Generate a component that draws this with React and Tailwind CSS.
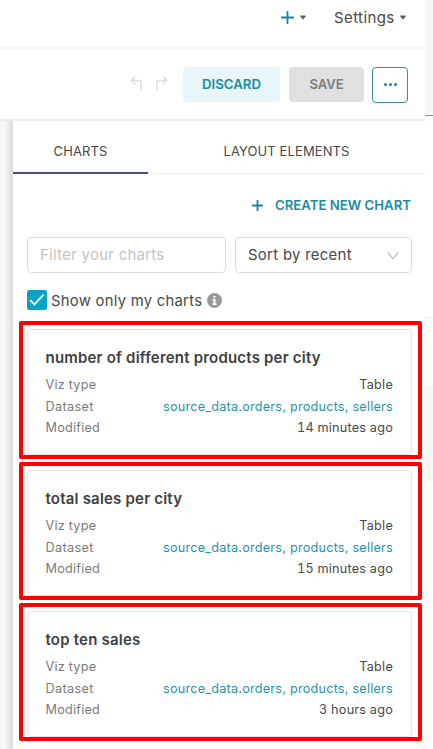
import React from "react";

const charts = [
  { title: "number of different products per city", modified: "14 minutes ago" },
  { title: "total sales per city", modified: "15 minutes ago" },
  { title: "top ten sales", modified: "3 hours ago" },
];

function Caret({ className }) {
  return (
    <svg className={className} width="6" height="5" viewBox="0 0 6 5" fill="#5c5c5c">
      <path d="M0.6 0.5h4.8q.6.3.2.9L3.4 4.2q-.4.4-.8 0L.4 1.4Q0 .8.6.5z" />
    </svg>
  );
}

function Plus({ size, width }) {
  return (
    <svg width={size} height={size} viewBox="0 0 12 12" stroke="#1a85a0" strokeWidth={width} strokeLinecap="round">
      <path d="M6 .8v10.4M.8 6h10.4" />
    </svg>
  );
}

function Undo({ className }) {
  return (
    <svg className={className} width="13" height="16" viewBox="0 0 13 16" fill="none" stroke="#dedede" strokeWidth="1.5" strokeLinecap="round" strokeLinejoin="round">
      <path d="M4.8 1 1.3 4.5 4.8 8M1.5 4.5h7q2.7 0 2.7 2.7v7" />
    </svg>
  );
}

function ChartCard({ title, modified }) {
  return (
    <div className="h-[138px] w-[403px] rounded-[2px] border-4 border-[#ff0000] pt-1 pl-1">
      <div className="h-[126px] w-[385px] rounded-[4px] border border-[#e2e2e4] pt-[18px] pr-[18px] pl-[17.5px]">
        <h3 className="text-[15px] leading-[20px] font-semibold tracking-[0.2px] whitespace-nowrap text-[#404040]">{title}</h3>
        <div className="mt-[6px] flex h-[22px] justify-between text-[12.7px] leading-[22px] tracking-[0.21px] text-[#7a7a7a]">
          <span>Viz type</span>
          <span className="text-[#484848]">Table</span>
        </div>
        <div className="flex h-[21px] justify-between text-[12.7px] leading-[22px] tracking-[0.21px] text-[#7a7a7a]">
          <span className="tracking-[0.35px]">Dataset</span>
          <span className="text-[#2494ab]">source_data.orders, products, sellers</span>
        </div>
        <div className="flex h-[21px] justify-between text-[12.7px] leading-[22px] tracking-[0.21px] text-[#7a7a7a]">
          <span>Modified</span>
          <span className="text-[#484848] tabular-nums">{modified}</span>
        </div>
      </div>
    </div>
  );
}

export default function App() {
  return (
    <div className="flex h-[749px] w-[433px] overflow-hidden bg-white font-['Inter',sans-serif] text-[#484848]">
      <div className="flex w-[425px] shrink-0 flex-col">
        <header className="flex h-[49px] items-center border-b-2 border-[#f5f5f5] pb-[12px] pl-[281px]">
          <Plus size={13} width={1.7} />
          <Caret className="ml-[6px]" />
          <span className="mt-[2px] ml-[28px] w-[61px] text-[15px] tracking-[0.4px]">Settings</span>
          <Caret className="ml-[5px]" />
        </header>
        <div className="flex h-[72px] items-center border-b-2 border-[#ebebeb] pt-px pl-[130px]">
          <Undo className="-mt-[2px]" />
          <Undo className="-mt-[2px] ml-[12px] -scale-x-100" />
          <button className="ml-[15px] h-[35px] w-[97px] rounded-[4px] bg-[#e9f6f9] text-[13.2px] font-semibold text-[#1a8ba6]">DISCARD</button>
          <button className="ml-[9px] h-[35px] w-[75px] rounded-[4px] bg-[#e0e0e0] text-[13px] font-semibold text-[#7c7c7c]">SAVE</button>
          <button className="ml-[8px] flex h-[36px] w-[36px] items-center justify-center gap-[2px] rounded-[4px] border border-[#3b8c9d]">
            <i className="size-[3px] rounded-full bg-[#1a85a0]" />
            <i className="size-[3px] rounded-full bg-[#1a85a0]" />
            <i className="size-[3px] rounded-full bg-[#1a85a0]" />
          </button>
        </div>
        <main className="flex flex-1">
          <div className="w-[13px] shrink-0 bg-linear-to-r from-[#f7f7f7] from-40% to-[#dadada]" />
          <section className="w-[412px] shrink-0">
            <nav className="flex h-[53px] border-b border-[#f0f0f0] text-[13px] tracking-[0.1px]">
              <div className="flex h-[53px] w-[135px] items-center justify-center border-b-2 border-[#46537f] pt-[10px]">CHARTS</div>
              <div className="flex h-[53px] flex-1 items-center justify-center border-b-2 border-transparent pt-[10px]">LAYOUT ELEMENTS</div>
            </nav>
            <div className="mt-[21px] flex h-[20px] items-center justify-end gap-[12px] pr-[14px] text-[13.2px] font-semibold text-[#1a8ba6]">
              <Plus size={11} width={2} />
              <span className="pt-px">CREATE NEW CHART</span>
            </div>
            <div className="mt-[22px] flex gap-[9px] pl-[14px]">
              <div className="h-[36px] w-[199px] rounded-[4px] border border-[#dddde5] pl-[12px] text-[14.9px] leading-[34px] tracking-[0.3px] text-[#c4c4c4]">Filter your charts</div>
              <div className="flex h-[36px] w-[177px] items-center justify-between rounded-[4px] border border-[#dddde0] pr-[12px] pl-[12px] text-[14.9px] tracking-[0.3px]">
                <span className="pt-px">Sort by recent</span>
                <svg className="mt-[2px]" width="12" height="8" viewBox="0 0 12 8" fill="none" stroke="#bdbdbd" strokeWidth="1.2">
                  <path d="m1 .7 5 6 5-6" />
                </svg>
              </div>
            </div>
            <div className="mt-[16px] flex h-[22px] items-center pl-[14px]">
              <svg width="20" height="20" viewBox="0 0 20 20">
                <rect width="20" height="20" rx="2" fill="#08a4c6" />
                <path d="m3.2 10.2 4.2 4.3 9.2-9.8" fill="none" stroke="#fff" strokeWidth="1.9" />
              </svg>
              <span className="mt-[3px] ml-[4px] w-[156px] text-[14.8px] tracking-[0.28px] whitespace-nowrap">Show only my charts</span>
              <svg className="mt-px" width="15" height="15" viewBox="0 0 15 15">
                <circle cx="7.5" cy="7.5" r="7.5" fill="#999" />
                <path d="M6.3 3h2.2v1.7H6.3zM5.5 6h3v4.2h1V12h-4v-1.8h1V7.5h-1z" fill="#fff" />
              </svg>
            </div>
            <div className="mt-[10px] flex flex-col gap-[3px] pl-[6px]">
              {charts.map((chart) => (
                <ChartCard key={chart.title} {...chart} />
              ))}
            </div>
          </section>
        </main>
      </div>
      <aside className="w-[8px]">
        <div className="h-[116px] border-b border-[#8f8f8f] bg-[#f7f7f7]" />
        <div className="h-[203px] border-b-2 border-[#f4f4f4]" />
        <div className="mt-[66px] h-[97px] bg-[#f7f7f7]" />
      </aside>
    </div>
  );
}
